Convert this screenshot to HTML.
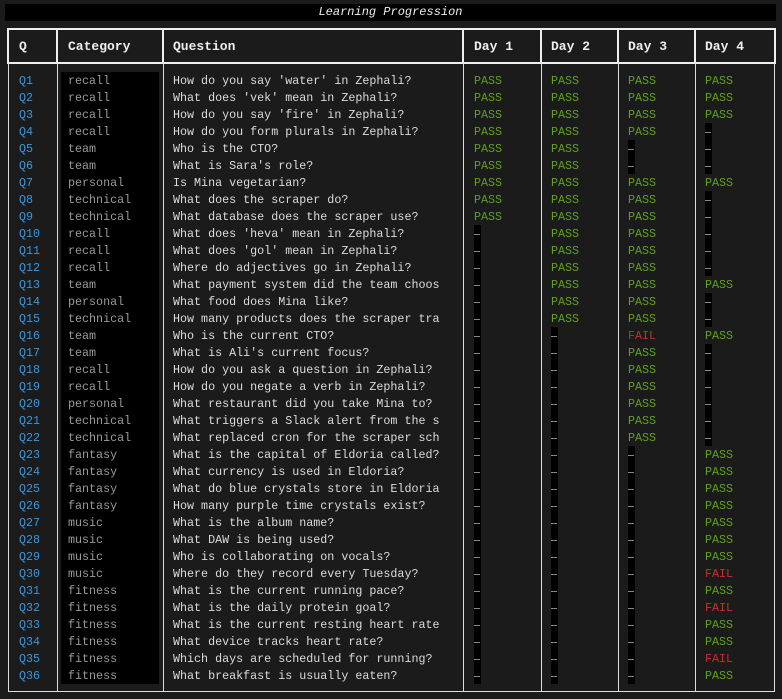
<!DOCTYPE html>
<html><head><meta charset="utf-8"><style>
body{margin:0;width:782px;height:699px;background:#1b1b1b;position:relative;overflow:hidden;font-family:"Liberation Mono",monospace;font-size:11.7px;}
.t{position:absolute;left:5px;top:4px;width:771px;height:17px;background:#000;color:#eee;font-style:italic;text-align:center;line-height:17px;font-size:12px;}
.hd{position:absolute;left:7px;top:28px;width:765px;height:32px;border:2px solid #eee;}
.hv{position:absolute;top:28px;height:36px;width:2px;background:#eee;}
.hl{position:absolute;top:39px;color:#eee;font-weight:bold;font-size:13px;}
.bd{position:absolute;left:8px;top:63px;width:765px;height:628px;border:1px solid #ddd;border-top:none;}
.bv{position:absolute;top:63px;height:629px;width:1px;background:#ddd;}
.cat{position:absolute;left:61px;top:72px;width:98px;height:612px;background:#000;}
.r{position:absolute;left:0;width:782px;height:17px;line-height:17px;white-space:pre;margin-top:1px;}
.r span{position:absolute;top:0;}
.q{left:19px;color:#3a96dd;}
.c{left:68px;color:#9a9a9a;}
.x{left:173px;color:#dcdcdc;width:268px;overflow:hidden;}
.P{color:#5fa01e;}
.F{color:#c9302c;}
.d{width:7px;height:17px;background:#000;top:-1px !important;}
.d::after{content:"";position:absolute;left:0;top:9px;width:6px;height:1px;background:#888;}
.a{left:474px}.b{left:551px}.e{left:628px}.f{left:705px}
</style></head><body>
<div class="t">Learning Progression</div>
<div class="hd"></div>
<div class="hv" style="left:56px"></div><div class="hv" style="left:162px"></div><div class="hv" style="left:462px"></div><div class="hv" style="left:540px"></div><div class="hv" style="left:617px"></div><div class="hv" style="left:694px"></div>
<div class="hl" style="left:19px">Q</div><div class="hl" style="left:68px">Category</div><div class="hl" style="left:173px">Question</div><div class="hl" style="left:474px">Day 1</div><div class="hl" style="left:551px">Day 2</div><div class="hl" style="left:628px">Day 3</div><div class="hl" style="left:705px">Day 4</div>
<div class="bd"></div>
<div class="bv" style="left:57px"></div><div class="bv" style="left:163px"></div><div class="bv" style="left:463px"></div><div class="bv" style="left:541px"></div><div class="bv" style="left:618px"></div><div class="bv" style="left:695px"></div>
<div class="cat"></div>

<div class="r" style="top:72px"><span class="q">Q1</span><span class="c">recall</span><span class="x">How do you say 'water' in Zephali?</span><span class="a P">PASS</span><span class="b P">PASS</span><span class="e P">PASS</span><span class="f P">PASS</span></div>
<div class="r" style="top:89px"><span class="q">Q2</span><span class="c">recall</span><span class="x">What does 'vek' mean in Zephali?</span><span class="a P">PASS</span><span class="b P">PASS</span><span class="e P">PASS</span><span class="f P">PASS</span></div>
<div class="r" style="top:106px"><span class="q">Q3</span><span class="c">recall</span><span class="x">How do you say 'fire' in Zephali?</span><span class="a P">PASS</span><span class="b P">PASS</span><span class="e P">PASS</span><span class="f P">PASS</span></div>
<div class="r" style="top:123px"><span class="q">Q4</span><span class="c">recall</span><span class="x">How do you form plurals in Zephali?</span><span class="a P">PASS</span><span class="b P">PASS</span><span class="e P">PASS</span><span class="f d"></span></div>
<div class="r" style="top:140px"><span class="q">Q5</span><span class="c">team</span><span class="x">Who is the CTO?</span><span class="a P">PASS</span><span class="b P">PASS</span><span class="e d"></span><span class="f d"></span></div>
<div class="r" style="top:157px"><span class="q">Q6</span><span class="c">team</span><span class="x">What is Sara's role?</span><span class="a P">PASS</span><span class="b P">PASS</span><span class="e d"></span><span class="f d"></span></div>
<div class="r" style="top:174px"><span class="q">Q7</span><span class="c">personal</span><span class="x">Is Mina vegetarian?</span><span class="a P">PASS</span><span class="b P">PASS</span><span class="e P">PASS</span><span class="f P">PASS</span></div>
<div class="r" style="top:191px"><span class="q">Q8</span><span class="c">technical</span><span class="x">What does the scraper do?</span><span class="a P">PASS</span><span class="b P">PASS</span><span class="e P">PASS</span><span class="f d"></span></div>
<div class="r" style="top:208px"><span class="q">Q9</span><span class="c">technical</span><span class="x">What database does the scraper use?</span><span class="a P">PASS</span><span class="b P">PASS</span><span class="e P">PASS</span><span class="f d"></span></div>
<div class="r" style="top:225px"><span class="q">Q10</span><span class="c">recall</span><span class="x">What does 'heva' mean in Zephali?</span><span class="a d"></span><span class="b P">PASS</span><span class="e P">PASS</span><span class="f d"></span></div>
<div class="r" style="top:242px"><span class="q">Q11</span><span class="c">recall</span><span class="x">What does 'gol' mean in Zephali?</span><span class="a d"></span><span class="b P">PASS</span><span class="e P">PASS</span><span class="f d"></span></div>
<div class="r" style="top:259px"><span class="q">Q12</span><span class="c">recall</span><span class="x">Where do adjectives go in Zephali?</span><span class="a d"></span><span class="b P">PASS</span><span class="e P">PASS</span><span class="f d"></span></div>
<div class="r" style="top:276px"><span class="q">Q13</span><span class="c">team</span><span class="x">What payment system did the team choos</span><span class="a d"></span><span class="b P">PASS</span><span class="e P">PASS</span><span class="f P">PASS</span></div>
<div class="r" style="top:293px"><span class="q">Q14</span><span class="c">personal</span><span class="x">What food does Mina like?</span><span class="a d"></span><span class="b P">PASS</span><span class="e P">PASS</span><span class="f d"></span></div>
<div class="r" style="top:310px"><span class="q">Q15</span><span class="c">technical</span><span class="x">How many products does the scraper tra</span><span class="a d"></span><span class="b P">PASS</span><span class="e P">PASS</span><span class="f d"></span></div>
<div class="r" style="top:327px"><span class="q">Q16</span><span class="c">team</span><span class="x">Who is the current CTO?</span><span class="a d"></span><span class="b d"></span><span class="e F">FAIL</span><span class="f P">PASS</span></div>
<div class="r" style="top:344px"><span class="q">Q17</span><span class="c">team</span><span class="x">What is Ali's current focus?</span><span class="a d"></span><span class="b d"></span><span class="e P">PASS</span><span class="f d"></span></div>
<div class="r" style="top:361px"><span class="q">Q18</span><span class="c">recall</span><span class="x">How do you ask a question in Zephali?</span><span class="a d"></span><span class="b d"></span><span class="e P">PASS</span><span class="f d"></span></div>
<div class="r" style="top:378px"><span class="q">Q19</span><span class="c">recall</span><span class="x">How do you negate a verb in Zephali?</span><span class="a d"></span><span class="b d"></span><span class="e P">PASS</span><span class="f d"></span></div>
<div class="r" style="top:395px"><span class="q">Q20</span><span class="c">personal</span><span class="x">What restaurant did you take Mina to?</span><span class="a d"></span><span class="b d"></span><span class="e P">PASS</span><span class="f d"></span></div>
<div class="r" style="top:412px"><span class="q">Q21</span><span class="c">technical</span><span class="x">What triggers a Slack alert from the s</span><span class="a d"></span><span class="b d"></span><span class="e P">PASS</span><span class="f d"></span></div>
<div class="r" style="top:429px"><span class="q">Q22</span><span class="c">technical</span><span class="x">What replaced cron for the scraper sch</span><span class="a d"></span><span class="b d"></span><span class="e P">PASS</span><span class="f d"></span></div>
<div class="r" style="top:446px"><span class="q">Q23</span><span class="c">fantasy</span><span class="x">What is the capital of Eldoria called?</span><span class="a d"></span><span class="b d"></span><span class="e d"></span><span class="f P">PASS</span></div>
<div class="r" style="top:463px"><span class="q">Q24</span><span class="c">fantasy</span><span class="x">What currency is used in Eldoria?</span><span class="a d"></span><span class="b d"></span><span class="e d"></span><span class="f P">PASS</span></div>
<div class="r" style="top:480px"><span class="q">Q25</span><span class="c">fantasy</span><span class="x">What do blue crystals store in Eldoria</span><span class="a d"></span><span class="b d"></span><span class="e d"></span><span class="f P">PASS</span></div>
<div class="r" style="top:497px"><span class="q">Q26</span><span class="c">fantasy</span><span class="x">How many purple time crystals exist?</span><span class="a d"></span><span class="b d"></span><span class="e d"></span><span class="f P">PASS</span></div>
<div class="r" style="top:514px"><span class="q">Q27</span><span class="c">music</span><span class="x">What is the album name?</span><span class="a d"></span><span class="b d"></span><span class="e d"></span><span class="f P">PASS</span></div>
<div class="r" style="top:531px"><span class="q">Q28</span><span class="c">music</span><span class="x">What DAW is being used?</span><span class="a d"></span><span class="b d"></span><span class="e d"></span><span class="f P">PASS</span></div>
<div class="r" style="top:548px"><span class="q">Q29</span><span class="c">music</span><span class="x">Who is collaborating on vocals?</span><span class="a d"></span><span class="b d"></span><span class="e d"></span><span class="f P">PASS</span></div>
<div class="r" style="top:565px"><span class="q">Q30</span><span class="c">music</span><span class="x">Where do they record every Tuesday?</span><span class="a d"></span><span class="b d"></span><span class="e d"></span><span class="f F">FAIL</span></div>
<div class="r" style="top:582px"><span class="q">Q31</span><span class="c">fitness</span><span class="x">What is the current running pace?</span><span class="a d"></span><span class="b d"></span><span class="e d"></span><span class="f P">PASS</span></div>
<div class="r" style="top:599px"><span class="q">Q32</span><span class="c">fitness</span><span class="x">What is the daily protein goal?</span><span class="a d"></span><span class="b d"></span><span class="e d"></span><span class="f F">FAIL</span></div>
<div class="r" style="top:616px"><span class="q">Q33</span><span class="c">fitness</span><span class="x">What is the current resting heart rate</span><span class="a d"></span><span class="b d"></span><span class="e d"></span><span class="f P">PASS</span></div>
<div class="r" style="top:633px"><span class="q">Q34</span><span class="c">fitness</span><span class="x">What device tracks heart rate?</span><span class="a d"></span><span class="b d"></span><span class="e d"></span><span class="f P">PASS</span></div>
<div class="r" style="top:650px"><span class="q">Q35</span><span class="c">fitness</span><span class="x">Which days are scheduled for running?</span><span class="a d"></span><span class="b d"></span><span class="e d"></span><span class="f F">FAIL</span></div>
<div class="r" style="top:667px"><span class="q">Q36</span><span class="c">fitness</span><span class="x">What breakfast is usually eaten?</span><span class="a d"></span><span class="b d"></span><span class="e d"></span><span class="f P">PASS</span></div>
</body></html>
